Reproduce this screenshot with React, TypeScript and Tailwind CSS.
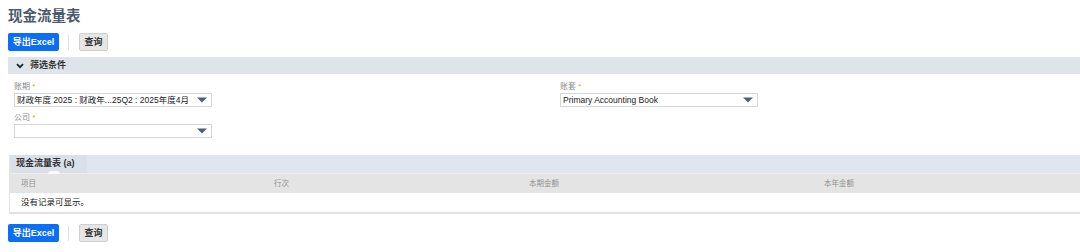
import React from 'react';

const font = { fontFamily: '"Liberation Sans", Arial, "Noto Sans CJK SC", sans-serif' };

const Arrow = () => (
  <svg width="10" height="6" viewBox="0 0 10 6" className="shrink-0">
    <path d="M0 0.5 L10 0.5 L5 5.5 Z" fill="#4d5f79" />
  </svg>
);

const Field = ({ label, value, className }: { label: string; value?: string; className?: string }) => (
  <div className={className}>
    <div className="h-[11px] text-[8px] leading-[10px] text-[#8a8a8a]">
      {label} <span className="text-[#f0a000]">*</span>
    </div>
    <div className="flex h-[14px] w-[198px] items-center justify-between border border-[#d6d6d6] bg-white pl-[2px] pr-[4px]">
      <span className="text-[8.5px] leading-none text-[#222] whitespace-nowrap">{value}</span>
      <Arrow />
    </div>
  </div>
);

const Toolbar = () => (
  <div className="flex items-center h-[18px]">
    <button className="h-[18px] w-[51px] rounded-[2px] bg-[#0b6ef5] text-[9px] font-bold text-white leading-none">
      导出Excel
    </button>
    <div className="mx-[9px] h-[15px] w-px bg-[#e2e2e2]" />
    <button className="ml-[1px] h-[18px] w-[29px] rounded-[2px] border border-[#cfcfcf] bg-[#e6e6e6] text-[9px] font-bold text-[#333] leading-none">
      查询
    </button>
  </div>
);

export default function App() {
  return (
    <div className="w-[1080px] h-[252px] bg-white overflow-hidden pl-[8px]" style={font}>
      <h1 className="pt-[7px] h-[33px] text-[14.5px] font-bold leading-[18px] text-[#4b596d]">现金流量表</h1>

      <Toolbar />

      <div className="mt-[6px] flex h-[17px] items-center bg-[#dfe4eb] pl-[8px]">
        <svg width="8" height="6" viewBox="0 0 8 6">
          <path d="M1 1.2 L4 4.2 L7 1.2" stroke="#222" strokeWidth="1.8" fill="none" />
        </svg>
        <span className="ml-[6px] text-[9px] font-bold text-[#333]">筛选条件</span>
      </div>

      <div className="mt-[8px] flex pl-[6px]">
        <div className="w-[546px]">
          <Field label="账期" value="财政年度 2025 : 财政年...25Q2 : 2025年度4月" />
          <Field label="公司" value="" className="mt-[6px]" />
        </div>
        <Field label="账套" value="Primary Accounting Book" />
      </div>

      <div className="mt-[17px] ml-[1px] border-l border-[#e4e4e4]">
        <div className="relative flex h-[18px] bg-[#e0e6ef]">
          <div className="flex items-center bg-[#dbe0e8] pl-[6px] pr-[12px] text-[9px] font-bold text-[#333]">
            现金流量表 (a)
          </div>
          <div className="absolute left-[38px] top-[16px] h-[3px] w-[12px] rounded-t-full bg-white/80" />
        </div>
        <div className="grid h-[20px] grid-cols-[253px_255px_295px_1fr] items-center border-t border-[#ececec] bg-[#e4e4e4] pl-[11px] text-[7.5px] text-[#939393]">
          <span>项目</span>
          <span>行次</span>
          <span>本期金额</span>
          <span>本年金额</span>
        </div>
        <div className="flex h-[19px] items-center pl-[11px] text-[8.5px] text-[#222]">没有记录可显示。</div>
        <div className="h-[2px] bg-[#e2e2e2]" />
      </div>

      <div className="mt-[10px]">
        <Toolbar />
      </div>
    </div>
  );
}
